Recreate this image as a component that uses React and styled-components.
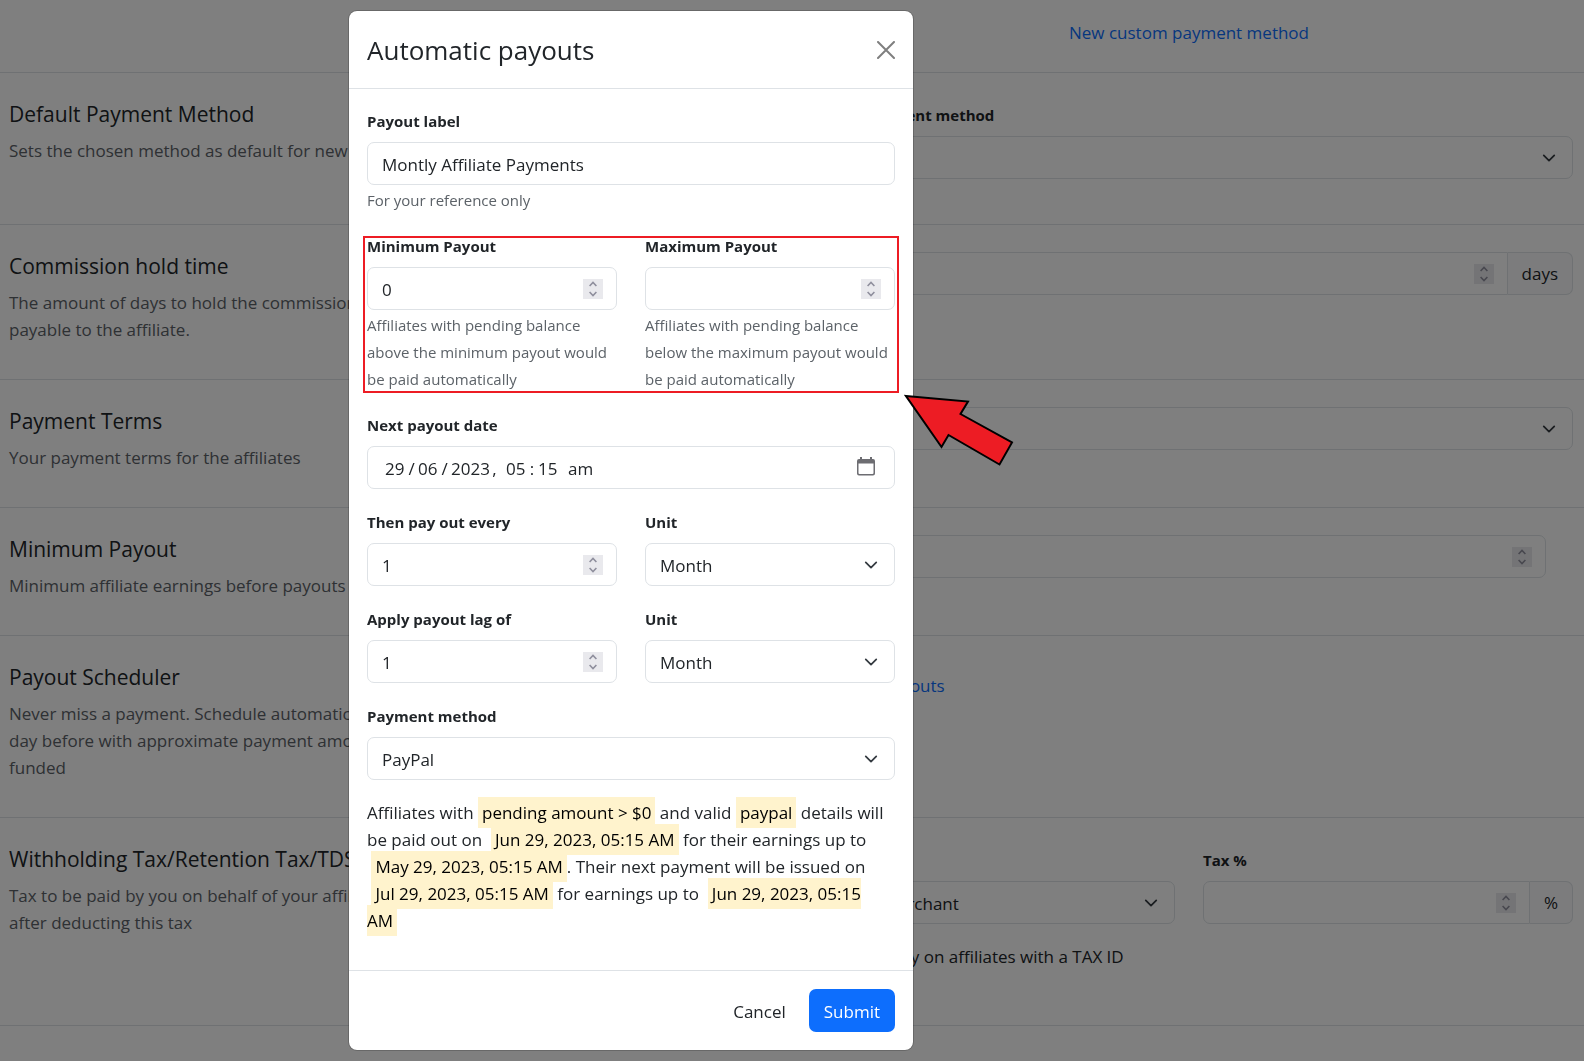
import React from "react";
import styled, { createGlobalStyle, css } from "styled-components";

const GlobalStyle = createGlobalStyle`
  *, *::before, *::after { box-sizing: border-box; }
  body {
    margin: 0;
    background: #fff;
    color: #212529;
    font-family: "Segoe UI", "Open Sans", "Noto Sans", sans-serif;
    font-size: 17px;
    line-height: 27px;
  }
  h1, h2, p { margin: 0; font-weight: 400; }
  input, select, button { font: inherit; color: inherit; }
`;

const Page = styled.main`
  min-height: 100vh;
  overflow: hidden;
`;

const TopBar = styled.div`
  display: grid;
  grid-template-columns: 1fr 1fr;
  column-gap: 28px;
  padding: 19px 11px 26px 9px;
`;

const TopLink = styled.div`
  grid-column: 2;
  text-align: center;
`;

const Link = styled.a`
  color: #0d6efd;
  text-decoration: none;
`;

const Row = styled.section`
  display: grid;
  grid-template-columns: 1fr 1fr;
  column-gap: 28px;
  align-items: start;
  padding: 27px 11px 36px 9px;
  border-top: 1px solid #dee2e6;
`;

const RowTitle = styled.h2`
  font-size: 21px;
  line-height: 28px;
  margin-bottom: 9px;
`;

const RowText = styled.p`
  color: #5c6268;
  white-space: pre-line;
`;

const Side = styled.div`
  display: grid;
  grid-template-columns: ${(p) => (p.$split ? "1fr 1fr" : "1fr")};
  column-gap: 28px;
  padding: ${(p) => p.$pad || "0"};
`;

const Field = styled.div`
  display: flex;
  flex-direction: column;
  min-width: 0;
`;

const Label = styled.label`
  display: block;
  margin-bottom: 9px;
  font-size: 15px;
  font-weight: 700;
  line-height: 24px;
`;

const Help = styled.p`
  margin: 2px 0 -1px;
  font-size: 15px;
  color: #5c6268;
`;

const frame = css`
  width: 100%;
  height: 43px;
  border: 1px solid #dee2e6;
  border-radius: 7px;
  background: #fff;
`;

const TextInput = styled.input`
  ${frame}
  padding: 2px 14px 0;
`;

const SelectWrap = styled.div`
  display: grid;
  align-items: center;
  > * { grid-area: 1 / 1; }
  > svg {
    justify-self: end;
    margin-right: 17px;
    pointer-events: none;
  }
`;

const SelectBox = styled.select`
  ${frame}
  appearance: none;
  padding: 2px 42px 0 14px;
`;

const NumberFrame = styled.div`
  ${frame}
  display: flex;
  align-items: center;
  padding: 0 13px 0 14px;
  ${(p) => p.$joined && "border-top-right-radius: 0; border-bottom-right-radius: 0;"}
`;

const BareInput = styled.input`
  flex: 1;
  min-width: 0;
  padding: 2px 0 0;
  border: 0;
  background: none;
  outline: none;
  appearance: textfield;
  &::-webkit-inner-spin-button { appearance: none; margin: 0; }
`;

const Stepper = styled.div`
  display: flex;
  flex-direction: column;
  width: 20px;
  background: #e9e9ed;
`;

const StepButton = styled.button`
  display: flex;
  justify-content: center;
  align-items: center;
  height: 10px;
  padding: 0;
  border: 0;
  background: none;
  color: #8f8f9d;
`;

const InputGroup = styled.div`
  display: flex;
`;

const Addon = styled.label`
  display: flex;
  align-items: center;
  height: 43px;
  padding: 0 14px;
  border: 1px solid #dee2e6;
  border-left: 0;
  border-radius: 0 7px 7px 0;
  background: #f8f9fa;
`;

const CheckRow = styled.div`
  display: flex;
  align-items: center;
  gap: 14px;
  grid-column: 1 / -1;
  margin-top: 19px;
  input { width: 18px; height: 18px; margin: 0; }
`;

const Overlay = styled.div`
  position: fixed;
  inset: 0;
  display: flex;
  justify-content: center;
  align-items: flex-start;
  padding: 10px 322px 10px 0;
  background: rgba(0, 0, 0, 0.5);
`;

const Modal = styled.form`
  width: 566px;
  border: 1px solid rgba(0, 0, 0, 0.18);
  border-radius: 9px;
  background: #fff;
  background-clip: padding-box;
`;

const ModalHeader = styled.header`
  display: flex;
  align-items: center;
  justify-content: space-between;
  padding: 18px 18px 17px;
  border-bottom: 1px solid #dee2e6;
`;

const ModalTitle = styled.h1`
  font-size: 26px;
  line-height: 42px;
`;

const CloseButton = styled.button`
  display: flex;
  padding: 0;
  border: 0;
  background: none;
  color: #7f7f7f;
`;

const ModalBody = styled.div`
  display: flex;
  flex-direction: column;
  gap: 21px;
  padding: 20px 18px 34px;
`;

const Pair = styled.div`
  position: relative;
  display: grid;
  grid-template-columns: 1fr 1fr;
  column-gap: 28px;
`;

const Outline = styled.div`
  position: absolute;
  inset: 2px -4px -1px;
  border: 2px solid #ed1c24;
  pointer-events: none;
`;

const Arrow = styled.svg`
  position: absolute;
  left: calc(100% + 9px);
  top: calc(100% + 2px);
  pointer-events: none;
`;

const DateFrame = styled.div`
  ${frame}
  display: flex;
  align-items: center;
  padding: 2px 19px 0 17px;
  > svg { margin: 0 0 4px auto; }
`;

const Segment = styled.input`
  width: ${(p) => p.$w}px;
  padding: 0;
  border: 0;
  background: none;
  outline: none;
`;

const Summary = styled.p`
  margin: -2px 0 2px;
`;

const Mark = styled.span`
  padding: 4px;
  background: #fff3cd;
  color: #000;
`;

const Sep = styled.span`
  width: ${(p) => p.$w}px;
  text-align: center;
`;

const ModalFooter = styled.footer`
  display: flex;
  justify-content: flex-end;
  gap: 8px;
  padding: 18px;
  border-top: 1px solid #dee2e6;
`;

const Button = styled.button`
  height: 43px;
  padding: 2px 15px 0;
  border: 0;
  border-radius: 7px;
  background: ${(p) => (p.$primary ? "#0d6efd" : "transparent")};
  color: ${(p) => (p.$primary ? "#fff" : "#212529")};
`;

const Chevron = () => (
  <svg width="14" height="14" viewBox="0 0 16 16" fill="none" stroke="#343a40" strokeWidth="2" strokeLinecap="round" strokeLinejoin="round">
    <path d="m2 5 6 6 6-6" />
  </svg>
);

function NumberBox({ id, value, joined, label }) {
  return (
    <NumberFrame $joined={joined}>
      <BareInput id={id} type="number" defaultValue={value} aria-label={label} />
      <Stepper>
        <StepButton type="button" aria-label="Increase">
          <svg width="8" height="6" viewBox="0 0 8 6" fill="none" stroke="currentColor" strokeWidth="1.6"><path d="M.6 5 4 1.5 7.4 5" /></svg>
        </StepButton>
        <StepButton type="button" aria-label="Decrease">
          <svg width="8" height="6" viewBox="0 0 8 6" fill="none" stroke="currentColor" strokeWidth="1.6"><path d="M.6 1 4 4.5 7.4 1" /></svg>
        </StepButton>
      </Stepper>
    </NumberFrame>
  );
}

function Select({ id, option, label }) {
  return (
    <SelectWrap>
      <SelectBox id={id} aria-label={label}>
        <option>{option}</option>
      </SelectBox>
      <Chevron />
    </SelectWrap>
  );
}

function Setting({ title, text, children }) {
  return (
    <Row>
      <div>
        <RowTitle>{title}</RowTitle>
        <RowText>{text}</RowText>
      </div>
      {children}
    </Row>
  );
}

function NumberField({ id, label, value, help }) {
  return (
    <Field>
      <Label htmlFor={id}>{label}</Label>
      <NumberBox id={id} value={value} />
      {help && <Help>{help}</Help>}
    </Field>
  );
}

function SelectField({ id, label, option }) {
  return (
    <Field>
      <Label htmlFor={id}>{label}</Label>
      <Select id={id} option={option} />
    </Field>
  );
}

function Settings() {
  return (
    <Page>
      <TopBar>
        <TopLink><Link href="#new">New custom payment method</Link></TopLink>
      </TopBar>
      <Setting title="Default Payment Method" text="Sets the chosen method as default for new affiliates">
        <Side $pad="3px 0 9px">
          <SelectField id="default-method" label="Default payment method" option="" />
        </Side>
      </Setting>
      <Setting title="Commission hold time" text={"The amount of days to hold the commission before it becomes\npayable to the affiliate."}>
        <InputGroup>
          <NumberBox id="hold" joined />
          <Addon htmlFor="hold">days</Addon>
        </InputGroup>
      </Setting>
      <Setting title="Payment Terms" text="Your payment terms for the affiliates">
        <Select id="terms" option="" label="Payment terms" />
      </Setting>
      <Setting title="Minimum Payout" text="Minimum affiliate earnings before payouts">
        <Side $pad="0 27px 0 0"><NumberBox id="minimum" label="Minimum payout" /></Side>
      </Setting>
      <Setting title="Payout Scheduler" text={"Never miss a payment. Schedule automatic payouts and get an email a\nday before with approximate payment amount to keep your account\nfunded"}>
        <Side $pad="9px 0 0"><Link href="#automatic">Schedule payouts</Link></Side>
      </Setting>
      <Setting title="Withholding Tax/Retention Tax/TDS" text={"Tax to be paid by you on behalf of your affiliates, payouts are sent\nafter deducting this tax"}>
        <Side $split $pad="3px 0 19px">
          <SelectField id="tax-payer" label="Tax paid by" option="Paid by merchant" />
          <Field>
            <Label htmlFor="tax">Tax %</Label>
            <InputGroup>
              <NumberBox id="tax" joined />
              <Addon htmlFor="tax">%</Addon>
            </InputGroup>
          </Field>
          <CheckRow>
            <input id="tax-id" type="checkbox" />
            <label htmlFor="tax-id">Apply only on affiliates with a TAX ID</label>
          </CheckRow>
        </Side>
      </Setting>
      <Row />
    </Page>
  );
}

function DateField() {
  return (
    <Field>
      <Label htmlFor="day">Next payout date</Label>
      <DateFrame role="group" aria-label="Next payout date">
        <Segment id="day" $w={20} defaultValue="29" />
        <Sep $w={13}>/</Sep>
        <Segment aria-label="Month" $w={20} defaultValue="06" />
        <Sep $w={13}>/</Sep>
        <Segment aria-label="Year" $w={40} defaultValue="2023" />
        <Sep $w={7}>,</Sep>
        <Sep $w={8} />
        <Segment aria-label="Hour" $w={20} defaultValue="05" />
        <Sep $w={12}>:</Sep>
        <Segment aria-label="Minute" $w={20} defaultValue="15" />
        <Sep $w={10} />
        <Segment aria-label="AM or PM" $w={28} defaultValue="am" />
        <svg width="18" height="19" viewBox="0 0 18 19">
          <path d="M3 0h2v2h8V0h2v2h1a2 2 0 0 1 2 2v12.500a2 2 0 0 1-2 2H2a2 2 0 0 1-2-2V4a2 2 0 0 1 2-2h1zM1.500 6.500v9.500a1 1 0 0 0 1 1h13a1 1 0 0 0 1-1V6.500z" fill="#6d6d72" fillRule="evenodd" />
        </svg>
      </DateFrame>
    </Field>
  );
}

function PayoutModal() {
  return (
    <Overlay>
      <Modal role="dialog" aria-labelledby="modal-title">
        <ModalHeader>
          <ModalTitle id="modal-title">Automatic payouts</ModalTitle>
          <CloseButton type="button" aria-label="Close">
            <svg width="18" height="18" viewBox="0 0 18 18" fill="none" stroke="currentColor" strokeWidth="2" strokeLinecap="round">
              <path d="m1 1 16 16M17 1 1 17" />
            </svg>
          </CloseButton>
        </ModalHeader>
        <ModalBody>
          <Field>
            <Label htmlFor="payout-label">Payout label</Label>
            <TextInput id="payout-label" defaultValue="Montly Affiliate Payments" />
            <Help>For your reference only</Help>
          </Field>
          <Pair>
            <NumberField id="min" label="Minimum Payout" value="0" help="Affiliates with pending balance above the minimum payout would be paid automatically" />
            <NumberField id="max" label="Maximum Payout" help="Affiliates with pending balance below the maximum payout would be paid automatically" />
            <Outline />
            <Arrow width="112" height="74" viewBox="0 0 112 74">
              <path d="M2 2 64 7.500 56.500 20 108 48.500 95.500 70.500 44.500 41 37.500 53z" fill="#ed1c24" stroke="#000" strokeWidth="2" />
            </Arrow>
          </Pair>
          <DateField />
          <Pair>
            <NumberField id="every" label="Then pay out every" value="1" />
            <SelectField id="every-unit" label="Unit" option="Month" />
          </Pair>
          <Pair>
            <NumberField id="lag" label="Apply payout lag of" value="1" />
            <SelectField id="lag-unit" label="Unit" option="Month" />
          </Pair>
          <SelectField id="method" label="Payment method" option="PayPal" />
          <Summary>
            Affiliates with <Mark>pending amount &gt; $0</Mark> and valid <Mark>paypal</Mark> details will be paid out on{" "}
            &nbsp;<Mark>Jun 29, 2023, 05:15 AM</Mark> for their earnings up to{" "}
            &nbsp;<Mark>May 29, 2023, 05:15 AM</Mark>. Their next payment will be issued on{" "}
            &nbsp;<Mark>Jul&nbsp;29, 2023, 05:15 AM</Mark> for earnings up to{" "}
            &nbsp;<Mark>Jun 29, 2023, 05:15 AM</Mark>
          </Summary>
        </ModalBody>
        <ModalFooter>
          <Button type="button">Cancel</Button>
          <Button type="button" $primary>Submit</Button>
        </ModalFooter>
      </Modal>
    </Overlay>
  );
}

export default function App() {
  return (
    <>
      <GlobalStyle />
      <Settings />
      <PayoutModal />
    </>
  );
}
